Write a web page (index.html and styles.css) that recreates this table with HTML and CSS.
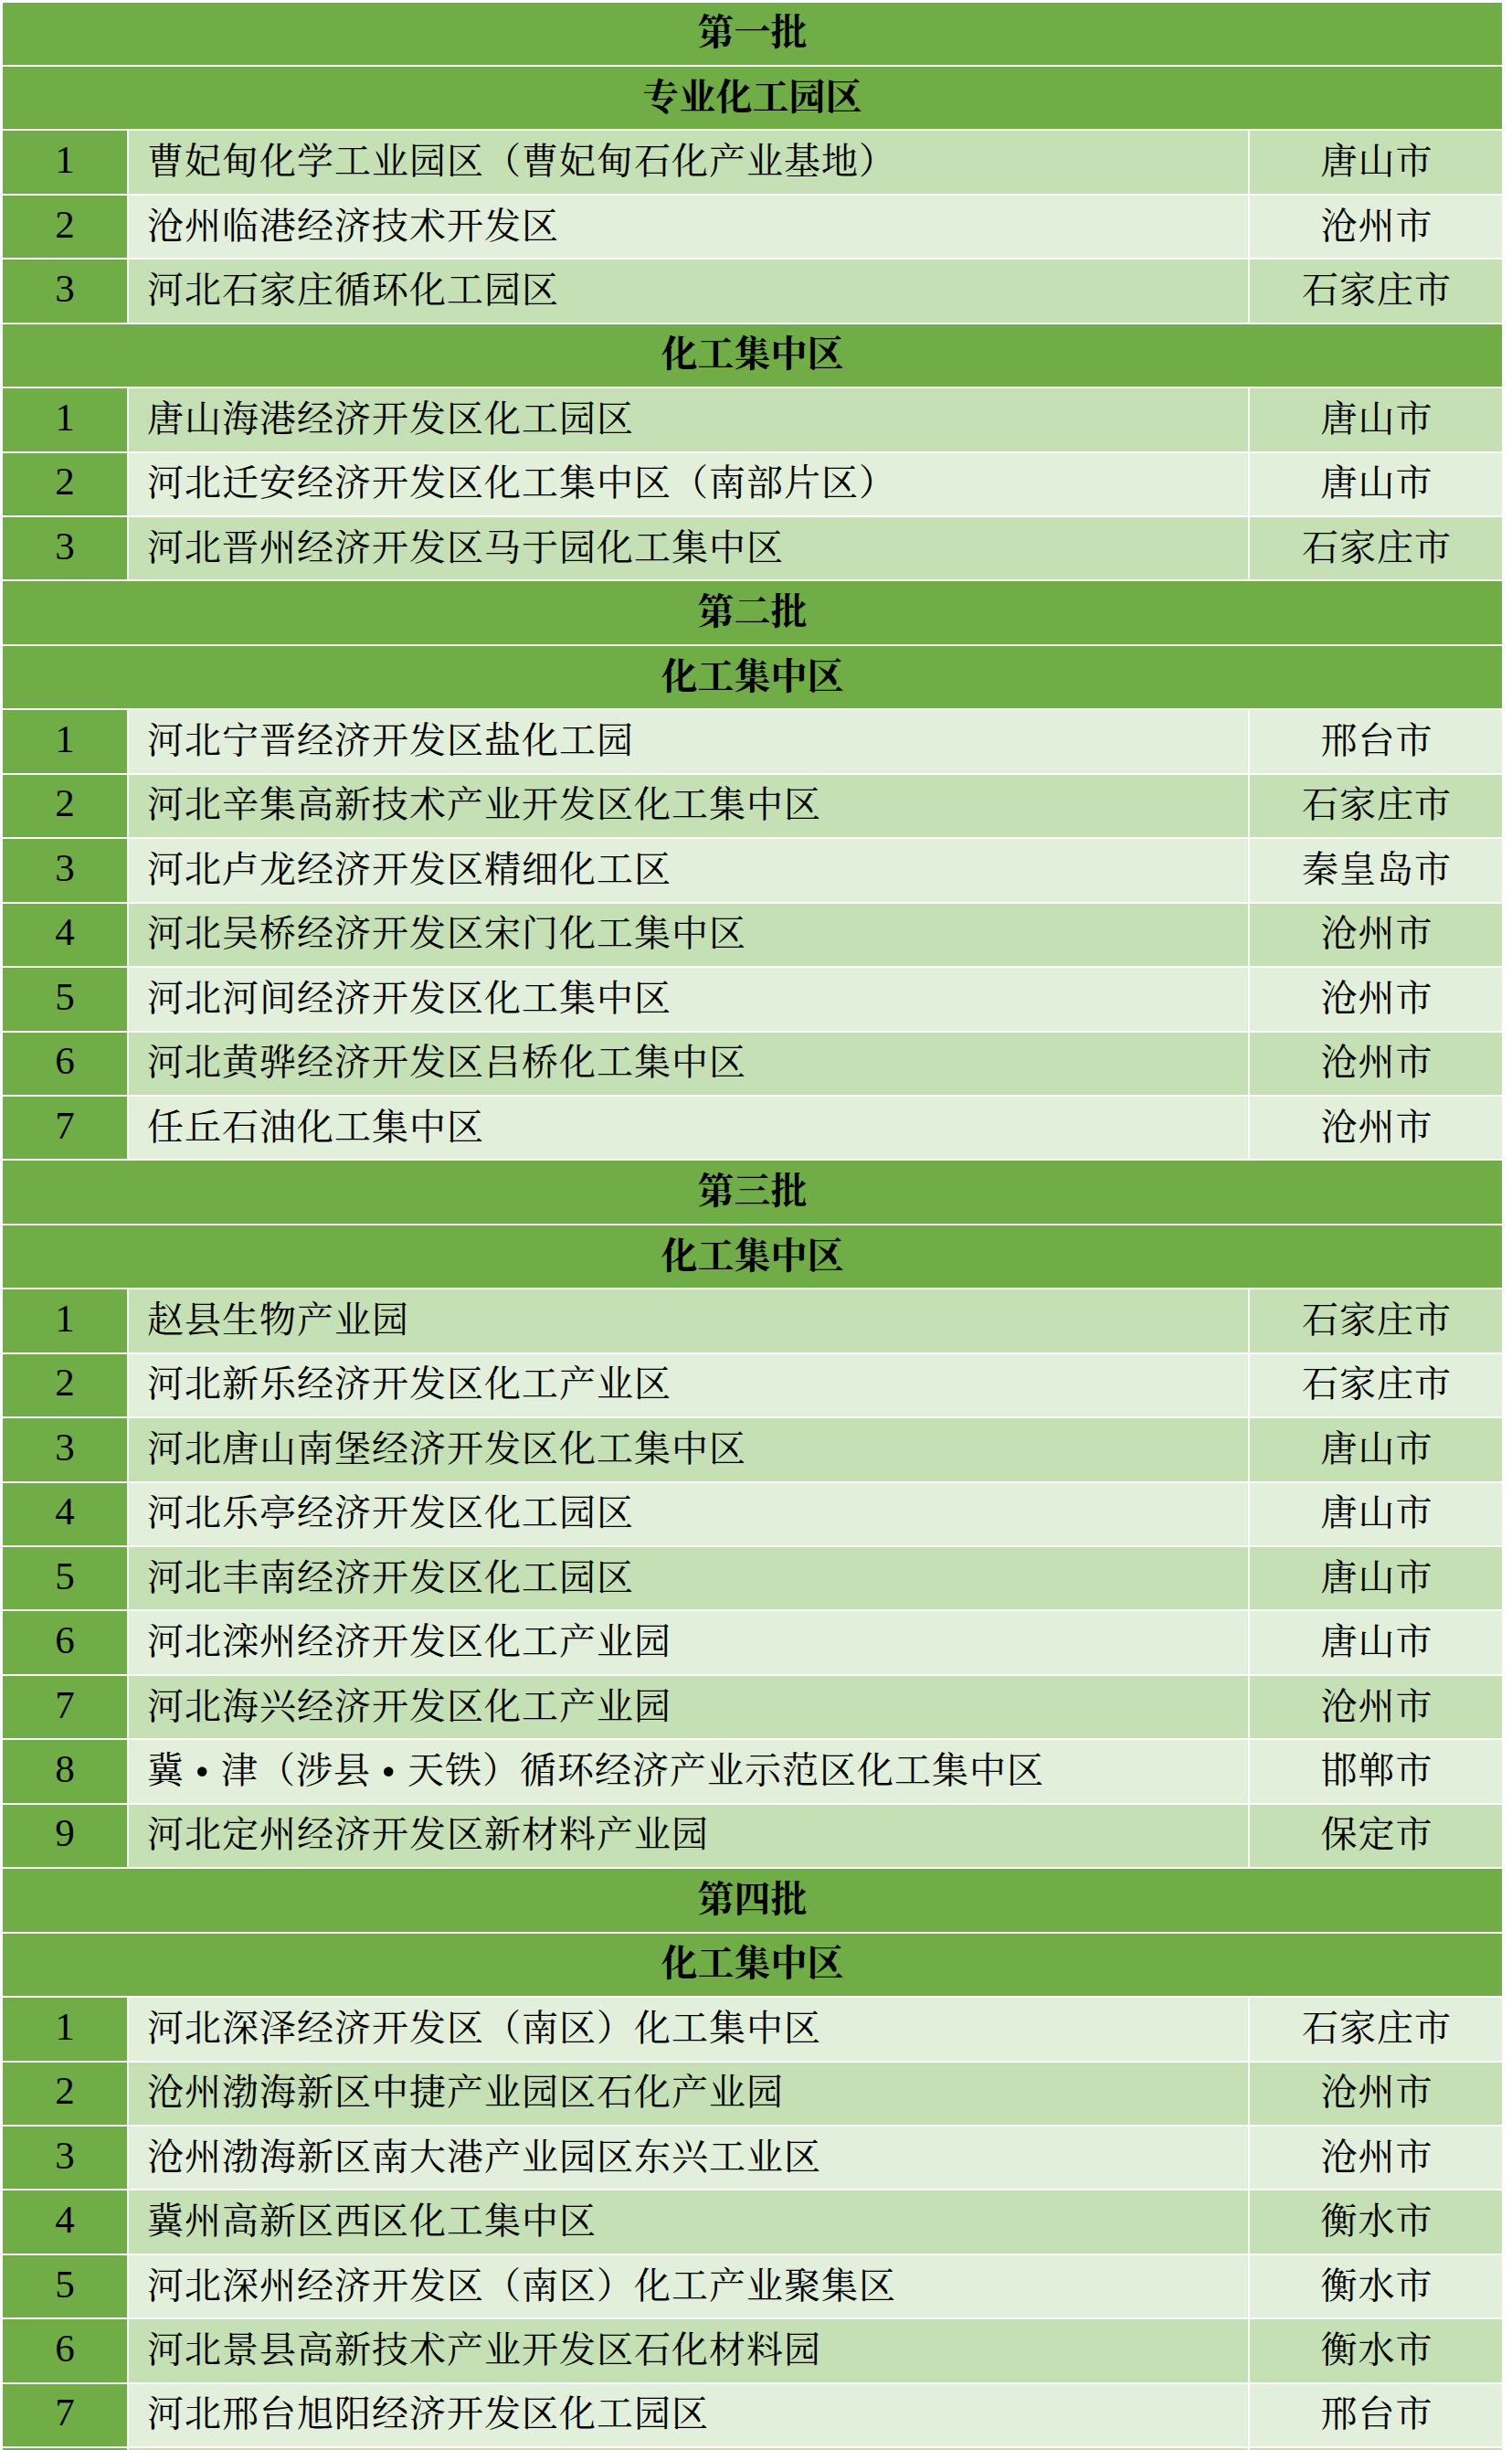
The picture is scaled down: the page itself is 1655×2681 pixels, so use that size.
FILE: index.html
```html
<!DOCTYPE html>
<html lang="zh-CN">
<head>
<meta charset="utf-8">
<title>化工园区名单</title>
<link rel="stylesheet" href="styles.css">
</head>
<body>
<div class="table">
  <div class="head">第一批</div>
  <div class="head">专业化工园区</div>
  <div class="row a"><div class="no">1</div><div class="name">曹妃甸化学工业园区（曹妃甸石化产业基地）</div><div class="city">唐山市</div></div>
  <div class="row b"><div class="no">2</div><div class="name">沧州临港经济技术开发区</div><div class="city">沧州市</div></div>
  <div class="row a"><div class="no">3</div><div class="name">河北石家庄循环化工园区</div><div class="city">石家庄市</div></div>
  <div class="head">化工集中区</div>
  <div class="row a"><div class="no">1</div><div class="name">唐山海港经济开发区化工园区</div><div class="city">唐山市</div></div>
  <div class="row b"><div class="no">2</div><div class="name">河北迁安经济开发区化工集中区（南部片区）</div><div class="city">唐山市</div></div>
  <div class="row a"><div class="no">3</div><div class="name">河北晋州经济开发区马于园化工集中区</div><div class="city">石家庄市</div></div>
  <div class="head">第二批</div>
  <div class="head">化工集中区</div>
  <div class="row b"><div class="no">1</div><div class="name">河北宁晋经济开发区盐化工园</div><div class="city">邢台市</div></div>
  <div class="row a"><div class="no">2</div><div class="name">河北辛集高新技术产业开发区化工集中区</div><div class="city">石家庄市</div></div>
  <div class="row b"><div class="no">3</div><div class="name">河北卢龙经济开发区精细化工区</div><div class="city">秦皇岛市</div></div>
  <div class="row a"><div class="no">4</div><div class="name">河北吴桥经济开发区宋门化工集中区</div><div class="city">沧州市</div></div>
  <div class="row b"><div class="no">5</div><div class="name">河北河间经济开发区化工集中区</div><div class="city">沧州市</div></div>
  <div class="row a"><div class="no">6</div><div class="name">河北黄骅经济开发区吕桥化工集中区</div><div class="city">沧州市</div></div>
  <div class="row b"><div class="no">7</div><div class="name">任丘石油化工集中区</div><div class="city">沧州市</div></div>
  <div class="head">第三批</div>
  <div class="head">化工集中区</div>
  <div class="row a"><div class="no">1</div><div class="name">赵县生物产业园</div><div class="city">石家庄市</div></div>
  <div class="row b"><div class="no">2</div><div class="name">河北新乐经济开发区化工产业区</div><div class="city">石家庄市</div></div>
  <div class="row a"><div class="no">3</div><div class="name">河北唐山南堡经济开发区化工集中区</div><div class="city">唐山市</div></div>
  <div class="row b"><div class="no">4</div><div class="name">河北乐亭经济开发区化工园区</div><div class="city">唐山市</div></div>
  <div class="row a"><div class="no">5</div><div class="name">河北丰南经济开发区化工园区</div><div class="city">唐山市</div></div>
  <div class="row b"><div class="no">6</div><div class="name">河北滦州经济开发区化工产业园</div><div class="city">唐山市</div></div>
  <div class="row a"><div class="no">7</div><div class="name">河北海兴经济开发区化工产业园</div><div class="city">沧州市</div></div>
  <div class="row b"><div class="no">8</div><div class="name">冀<span class="dot">·</span>津（涉县<span class="dot">·</span>天铁）循环经济产业示范区化工集中区</div><div class="city">邯郸市</div></div>
  <div class="row a"><div class="no">9</div><div class="name">河北定州经济开发区新材料产业园</div><div class="city">保定市</div></div>
  <div class="head">第四批</div>
  <div class="head">化工集中区</div>
  <div class="row b"><div class="no">1</div><div class="name">河北深泽经济开发区（南区）化工集中区</div><div class="city">石家庄市</div></div>
  <div class="row a"><div class="no">2</div><div class="name">沧州渤海新区中捷产业园区石化产业园</div><div class="city">沧州市</div></div>
  <div class="row b"><div class="no">3</div><div class="name">沧州渤海新区南大港产业园区东兴工业区</div><div class="city">沧州市</div></div>
  <div class="row a"><div class="no">4</div><div class="name">冀州高新区西区化工集中区</div><div class="city">衡水市</div></div>
  <div class="row b"><div class="no">5</div><div class="name">河北深州经济开发区（南区）化工产业聚集区</div><div class="city">衡水市</div></div>
  <div class="row a"><div class="no">6</div><div class="name">河北景县高新技术产业开发区石化材料园</div><div class="city">衡水市</div></div>
  <div class="row b"><div class="no">7</div><div class="name">河北邢台旭阳经济开发区化工园区</div><div class="city">邢台市</div></div>
  <div class="row a"><div class="no"></div><div class="name"></div><div class="city"></div></div>
</div>
</body>
</html>
```
FILE: styles.css
```css
html, body {
  margin: 0;
  padding: 0;
  background: #ffffff;
}

body {
  font-family: "Noto Serif CJK SC", "Noto Sans CJK SC", "Liberation Serif", serif;
  color: #000000;
  text-spacing-trim: space-all;
  font-feature-settings: "halt" 0, "chws" 0;
}

.table {
  display: flex;
  flex-direction: column;
  gap: 2px;
  padding: 2.5px 0 0 3px;
  width: 1641px;
}

.head {
  height: 68.44px;
  background: #70ad47;
  display: flex;
  align-items: center;
  justify-content: center;
  font-size: 40px;
  font-weight: bold;
  padding-bottom: 10px;
  box-sizing: border-box;
}

.row {
  height: 68.44px;
  display: grid;
  grid-template-columns: 136px 1225px 276px;
  column-gap: 2px;
}

.row > div {
  display: flex;
  align-items: center;
  padding-bottom: 10px;
  box-sizing: border-box;
  font-size: 40px;
  letter-spacing: 1px;
  white-space: nowrap;
}

.row .no {
  background: #70ad47;
  justify-content: center;
  font-family: "Liberation Serif", serif;
  font-size: 43px;
  letter-spacing: 0;
  padding-bottom: 6px;
}

.row .name {
  padding-left: 20px;
}

.row .city {
  justify-content: center;
  padding-left: 2px;
}

.row.a .name,
.row.a .city {
  background: #c5e0b4;
}

.row.b .name,
.row.b .city {
  background: #e2efda;
}

.dot {
  display: inline-block;
  width: 1em;
  text-align: center;
  font-weight: bold;
  transform: scale(1.6);
}
```
